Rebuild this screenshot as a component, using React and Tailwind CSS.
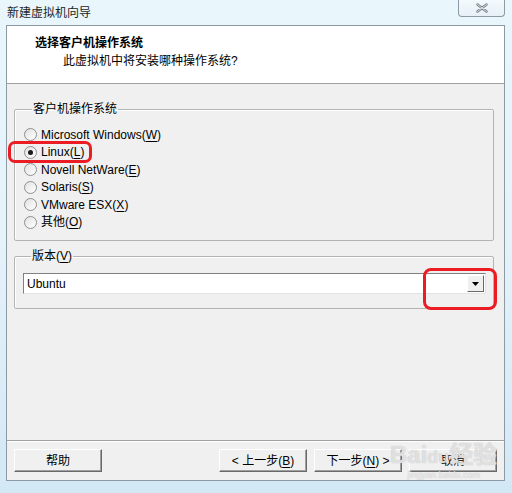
import React from 'react';

const FONT = { fontFamily: '"Liberation Sans", "Noto Sans CJK SC", sans-serif' };

const OS_LIST = [
    { label: 'Microsoft Windows', key: 'W' },
    { label: 'Linux', key: 'L', checked: true },
    { label: 'Novell NetWare', key: 'E' },
    { label: 'Solaris', key: 'S' },
    { label: 'VMware ESX', key: 'X' },
    { label: '其他', key: 'O' },
];

function Mnemonic({ label, k }) {
    return (
        <span>
            {label}(<span className="underline underline-offset-2">{k}</span>)
        </span>
    );
}

function Radio({ checked }) {
    return (
        <span className="w-[13px] h-[13px] rounded-full border border-[#8e8f8f] bg-gradient-to-br from-[#e2e2e2] to-white flex items-center justify-center shrink-0">
            {checked && <span className="w-[5px] h-[5px] rounded-full bg-[#1a1a1a]" />}
        </span>
    );
}

function WinButton({ children }) {
    return (
        <button
            type="button"
            className="w-[88px] h-[23px] bg-[#f0f0f0] border border-t-white border-l-white border-r-[#696969] border-b-[#696969] shadow-[inset_-1px_-1px_0_#a0a0a0] text-[12px] text-black flex items-center justify-center"
        >
            {children}
        </button>
    );
}

export default function App() {
    return (
        <div
            className="relative w-[512px] h-[493px] overflow-hidden bg-gradient-to-b from-[#e9f6fc] via-[#e4f2fa] to-[#d3e8f5] flex flex-col text-black"
            style={FONT}
        >
            {/* Title bar */}
            <div className="h-[25px] flex items-center pl-[7px] text-[12px] text-[#1e1e1e]">
                新建虚拟机向导
            </div>
            <div className="absolute top-0 right-[7px] w-[47px] h-[17px] rounded-b-[4px] border border-t-0 border-[#8c9aa5] bg-gradient-to-b from-[#f4fafd] to-[#e6f0f6] flex items-center justify-center">
                <svg width="12" height="10" viewBox="0 0 12 10">
                    <path d="M1.5 1.5 L10.5 8.5 M10.5 1.5 L1.5 8.5" stroke="#6f7b84" strokeWidth="2.4" strokeLinecap="round" />
                    <path d="M1.5 1.5 L10.5 8.5 M10.5 1.5 L1.5 8.5" stroke="#fff" strokeWidth="0.8" strokeLinecap="round" />
                </svg>
            </div>

            {/* Client area */}
            <div className="ml-[6px] mr-[7px] h-[456px] border border-[#8e9aa3] bg-[#f0f0f0] flex flex-col">
                {/* Header */}
                <div className="h-[58px] bg-white border-b border-[#a0a0a0] pl-[28px] pt-[9px]">
                    <div className="text-[12px] font-bold leading-[16px]">选择客户机操作系统</div>
                    <div className="text-[12px] leading-[16px] pl-[28px] mt-[2px]">此虚拟机中将安装哪种操作系统?</div>
                </div>

                {/* Guest OS group */}
                <fieldset className="mt-[17px] ml-[7px] mr-[10px] border border-[#b4b4b4] rounded-[2px] pl-[9px] pb-[9px] shadow-[inset_1px_1px_0_#fff]">
                    <legend className="ml-[8px] px-[1px] text-[12px] leading-[16px]">客户机操作系统</legend>
                    <div className="flex flex-col pt-[9px]">
                        {OS_LIST.map((os) => (
                            <label key={os.key} className="h-[17.5px] flex items-center gap-[4px] text-[12px]">
                                <Radio checked={os.checked} />
                                <Mnemonic label={os.label} k={os.key} />
                            </label>
                        ))}
                    </div>
                </fieldset>

                {/* Version group */}
                <fieldset className="mt-[7px] ml-[7px] mr-[10px] border border-[#b4b4b4] rounded-[2px] pl-[8px] pr-[7px] pb-[14px] shadow-[inset_1px_1px_0_#fff]">
                    <legend className="ml-[8px] px-[1px] text-[12px] leading-[16px]">
                        <Mnemonic label="版本" k="V" />
                    </legend>
                    <div className="mt-[9px] h-[21px] bg-white border border-t-[#808080] border-l-[#808080] border-r-[#e3e3e3] border-b-[#e3e3e3] flex items-center">
                        <span className="flex-1 pl-[3px] text-[12px]">Ubuntu</span>
                        <span className="w-[17px] h-[17px] mr-[1px] bg-[#f0f0f0] border border-t-white border-l-white border-r-[#696969] border-b-[#696969] flex items-center justify-center">
                            <svg width="7" height="4" viewBox="0 0 7 4">
                                <path d="M0 0 H7 L3.5 4 Z" fill="#000" />
                            </svg>
                        </span>
                    </div>
                </fieldset>

                <div className="flex-1" />

                {/* Buttons */}
                <div className="border-t border-[#a0a0a0] shadow-[inset_0_1px_0_#fff] h-[40px] flex items-center pl-[7px] pr-[7px]">
                    <WinButton>帮助</WinButton>
                    <div className="flex-1" />
                    <div className="flex gap-[7px]">
                        <WinButton>&lt; 上一步(<span className="underline underline-offset-2">B</span>)</WinButton>
                        <WinButton>下一步(<span className="underline underline-offset-2">N</span>) &gt;</WinButton>
                        <WinButton>取消</WinButton>
                    </div>
                </div>
            </div>

            {/* Red annotations */}
            <div className="absolute left-[8px] top-[141px] w-[84px] h-[22px] border-[3px] border-[#ec1c24] rounded-[7px]" />
            <div className="absolute left-[423px] top-[268px] w-[74px] h-[42px] border-[3px] border-[#ec1c24] rounded-[8px]" />

            {/* Watermark */}
            <div className="absolute left-[390px] top-[442px] flex flex-col items-center pointer-events-none">
                <span className="text-[24px] font-bold leading-[26px] text-white/60 [text-shadow:0_0_1px_#b0b0b0]">
                    Bai<span className="text-[18px]">du</span>经验
                </span>
                <span className="text-[9px] leading-[10px] text-white/60 [text-shadow:0_0_1px_#b0b0b0]">jingyan.baidu.com</span>
            </div>
        </div>
    );
}
